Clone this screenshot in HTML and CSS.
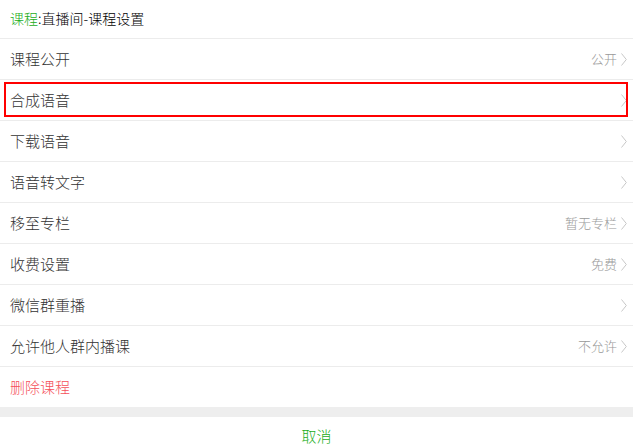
FILE: index.html
```html
<!DOCTYPE html>
<html lang="zh-CN">
<head>
<meta charset="utf-8">
<title>课程设置</title>
<link rel="stylesheet" href="styles.css">
</head>
<body>
<div class="page">
  <div class="title"><span class="title-tag">课程</span>:直播间-课程设置</div>
  <ul class="list">
    <li class="row"><span class="label">课程公开</span><span class="value">公开</span><svg class="chev" viewBox="0 0 6 13" width="6" height="13"><path d="M0.5 0.5 L5.3 6.5 L0.5 12.5" fill="none" stroke="#c8c8c8" stroke-width="1"/></svg></li>
    <li class="row row-active"><span class="label">合成语音</span><span class="value"></span><svg class="chev" viewBox="0 0 6 13" width="6" height="13"><path d="M0.5 0.5 L5.3 6.5 L0.5 12.5" fill="none" stroke="#c8c8c8" stroke-width="1"/></svg><span class="focus-box"></span></li>
    <li class="row"><span class="label">下载语音</span><span class="value"></span><svg class="chev" viewBox="0 0 6 13" width="6" height="13"><path d="M0.5 0.5 L5.3 6.5 L0.5 12.5" fill="none" stroke="#c8c8c8" stroke-width="1"/></svg></li>
    <li class="row"><span class="label">语音转文字</span><span class="value"></span><svg class="chev" viewBox="0 0 6 13" width="6" height="13"><path d="M0.5 0.5 L5.3 6.5 L0.5 12.5" fill="none" stroke="#c8c8c8" stroke-width="1"/></svg></li>
    <li class="row"><span class="label">移至专栏</span><span class="value">暂无专栏</span><svg class="chev" viewBox="0 0 6 13" width="6" height="13"><path d="M0.5 0.5 L5.3 6.5 L0.5 12.5" fill="none" stroke="#c8c8c8" stroke-width="1"/></svg></li>
    <li class="row"><span class="label">收费设置</span><span class="value">免费</span><svg class="chev" viewBox="0 0 6 13" width="6" height="13"><path d="M0.5 0.5 L5.3 6.5 L0.5 12.5" fill="none" stroke="#c8c8c8" stroke-width="1"/></svg></li>
    <li class="row"><span class="label">微信群重播</span><span class="value"></span><svg class="chev" viewBox="0 0 6 13" width="6" height="13"><path d="M0.5 0.5 L5.3 6.5 L0.5 12.5" fill="none" stroke="#c8c8c8" stroke-width="1"/></svg></li>
    <li class="row"><span class="label">允许他人群内播课</span><span class="value">不允许</span><svg class="chev" viewBox="0 0 6 13" width="6" height="13"><path d="M0.5 0.5 L5.3 6.5 L0.5 12.5" fill="none" stroke="#c8c8c8" stroke-width="1"/></svg></li>
    <li class="row row-last"><span class="label label-danger">删除课程</span></li>
  </ul>
  <div class="gap"></div>
  <div class="cancel">取消</div>
</div>
</body>
</html>
```

FILE: styles.css
```css
html, body {
  margin: 0;
  padding: 0;
  background: #fff;
}
body {
  font-family: "Microsoft YaHei", "Noto Sans CJK SC", "Noto Sans", sans-serif;
  font-weight: 300;
  color: #333;
  overflow: hidden;
}
.page {
  width: 633px;
}
.title {
  height: 38px;
  line-height: 37px;
  padding-left: 10px;
  font-size: 14px;
  color: #000;
  border-bottom: 1px solid #ececec;
}
.title-tag {
  color: #1aad19;
}
.list {
  list-style: none;
  margin: 0;
  padding: 0;
}
.row {
  position: relative;
  display: flex;
  align-items: center;
  height: 38px;
  padding: 0 6px 2px 10px;
  border-bottom: 1px solid #ececec;
}
.row-last {
  border-bottom: none;
}
.label {
  flex: 1;
  font-size: 15px;
  color: #333;
}
.label-danger {
  color: #f5505a;
}
.value {
  font-size: 13px;
  color: #999;
  margin-right: 4px;
}
.chev {
  display: block;
  flex: none;
  margin-top: 2px;
}
.focus-box {
  position: absolute;
  top: 2px;
  left: 4px;
  right: 5px;
  bottom: 3px;
  border: 2px solid #f00;
  pointer-events: none;
}
.gap {
  height: 10px;
  background: #eeeeee;
}
.cancel {
  height: 40px;
  line-height: 38px;
  text-align: center;
  font-size: 15px;
  color: #1aad19;
}
```
